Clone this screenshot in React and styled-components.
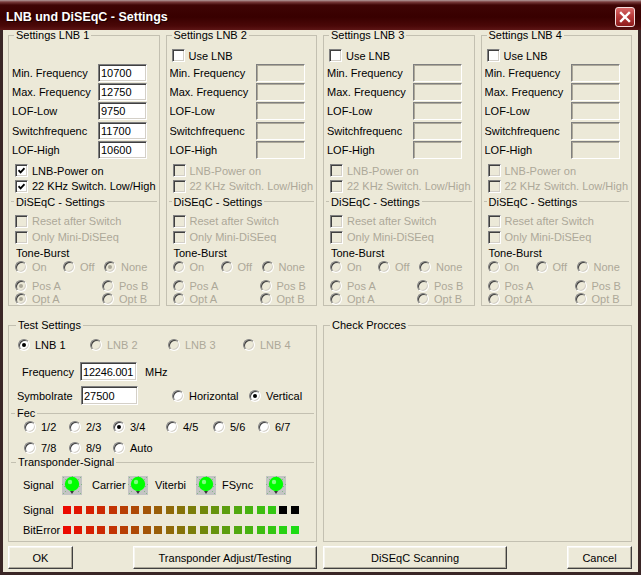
import React from 'react';
import styled, { createGlobalStyle } from 'styled-components';

const FACE = '#ece9d8';
const GRAY = '#aca899';
const LINE = '#c3c0b1';
const FRAME = '#3a2626';

const GlobalStyle = createGlobalStyle`
  html, body { margin: 0; padding: 0; background: ${FACE}; }
  body { font-family: "Liberation Sans", Arial, sans-serif; font-size: 11px; color: #000; }
  * { box-sizing: border-box; }
`;

const barColor = i => {
  const t = i / 20;
  const r = Math.round(235 - 205 * t);
  const g = Math.round(10 + 210 * t);
  return `rgb(${r},${g},${Math.round(20 * t)})`;
};

const CheckTick = () => (
  <svg width="7" height="7" viewBox="0 0 7 7">
    <path d="M0.5 3.2L2.6 5.4L6.5 1.2" fill="none" stroke="#000" strokeWidth="1.8" />
  </svg>
);

const LED_DOTS = [
  [1, 1], [3, 3], [18, 1], [16, 3], [1, 17], [3, 15], [18, 17], [16, 15],
  [0, 8], [19, 8], [2, 10], [17, 10], [10, 0]
];

const Led = () => (
  <svg width="20" height="19" viewBox="0 0 20 19">
    <rect width="20" height="19" fill="#c4c4c4" />
    {LED_DOTS.map(([x, y]) => (
      <rect key={`${x}-${y}`} x={x} y={y} width="1" height="1" fill="#86b886" />
    ))}
    <circle cx="10" cy="8" r="7.2" fill="#00ff00" />
    <circle cx="8" cy="6" r="2.2" fill="#7dff7d" />
    <path d="M8 15h4l-2 3z" fill="#3a3a3a" />
  </svg>
);

const Choice = ({ radio, checked, off, children }) => (
  <ChoiceLabel $off={off} $gap={radio ? 5 : 4}>
    {radio ? (
      <RadioMark $on={checked} $off={off} />
    ) : (
      <CheckMark $off={off}>{checked && <CheckTick />}</CheckMark>
    )}
    {children}
  </ChoiceLabel>
);

const Bars = ({ lit }) => (
  <BarStrip>
    {Array.from({ length: 21 }, (v, i) => (
      <Bar key={i} $c={i < lit ? barColor(i) : '#000'} />
    ))}
  </BarStrip>
);

const FIELDS = [
  { label: 'Min. Frequency', h: 19 },
  { label: 'Max. Frequency', h: 19 },
  { label: 'LOF-Low', h: 20 },
  { label: 'Switchfrequenc', h: 19 },
  { label: 'LOF-High', h: 20 }
];

const LnbGroup = ({ n, values }) => {
  const first = n === 1;

  return (
    <Group $pb={0.5}>
      <Legend>Settings LNB {n}</Legend>
      <Row $h={15} $mt={7} $pl={3}>
        {!first && <Choice>Use LNB</Choice>}
      </Row>
      {FIELDS.map((f, i) => (
        <Row key={f.label} $h={f.h} $pl={1}>
          <FieldLabel $w={86}>{f.label}</FieldLabel>
          <TextBox $w={49} disabled={!first} readOnly value={first ? values[i] : ''} />
        </Row>
      ))}
      <Row $h={15} $mt={3} $pl={4}>
        <Choice checked={first} off={!first}>LNB-Power on</Choice>
      </Row>
      <Row $h={16} $pl={4}>
        <Choice checked={first} off={!first}>22 KHz Switch. Low/High</Choice>
      </Row>
      <Sub $mt={1.5}>
        <Legend>DiSEqC - Settings</Legend>
        <Row $h={15} $mt={6} $pl={4}>
          <Choice off>Reset after Switch</Choice>
        </Row>
        <Row $h={17} $pl={4}>
          <Choice off>Only Mini-DiSEeq</Choice>
        </Row>
        <Row $h={15} $pl={5}>Tone-Burst</Row>
        <OptionRow $h={13} $pl={4} $cols="48px 41px auto">
          <Choice radio off>On</Choice>
          <Choice radio off>Off</Choice>
          <Choice radio off checked={first}>None</Choice>
        </OptionRow>
        <OptionRow $h={13} $mt={6} $pl={4} $cols="87px auto">
          <Choice radio off checked={first}>Pos A</Choice>
          <Choice radio off>Pos B</Choice>
        </OptionRow>
        <OptionRow $h={12} $pl={4} $cols="87px auto">
          <Choice radio off checked={first}>Opt A</Choice>
          <Choice radio off>Opt B</Choice>
        </OptionRow>
      </Sub>
    </Group>
  );
};

const App = () => (
  <>
    <GlobalStyle />
    <Window>
      <TitleBar>
        <Title>LNB und DiSEqC - Settings</Title>
        <CloseBox>
          <svg width="14" height="14" viewBox="0 0 14 14">
            <path d="M3 3L11 11M11 3L3 11" stroke="#fff" strokeWidth="2.4" strokeLinecap="square" />
          </svg>
        </CloseBox>
      </TitleBar>
      <Body>
        <TopRow>
          <LnbGroup n={1} values={['10700', '12750', '9750', '11700', '10600']} />
          <LnbGroup n={2} />
          <LnbGroup n={3} />
          <LnbGroup n={4} />
        </TopRow>

        <BottomRow>
          <Group $pb={2.5}>
            <Legend $ml={5}>Test Settings</Legend>
            <OptionRow $h={14} $mt={7} $pl={7} $cols="72px 78px 75px auto">
              <Choice radio checked>LNB 1</Choice>
              <Choice radio off>LNB 2</Choice>
              <Choice radio off>LNB 3</Choice>
              <Choice radio off>LNB 4</Choice>
            </OptionRow>
            <Row $h={19} $mt={10} $pl={11}>
              <FieldLabel $w={58}>Frequency</FieldLabel>
              <TextBox $w={57} $h={19} $tight readOnly value="12246.001" />
              <Unit>MHz</Unit>
            </Row>
            <Row $h={19} $mt={5} $pl={6}>
              <FieldLabel $w={64}>Symbolrate</FieldLabel>
              <TextBox $w={57} $h={19} readOnly value="27500" />
              <Polarity>
                <Choice radio>Horizontal</Choice>
                <Choice radio checked>Vertical</Choice>
              </Polarity>
            </Row>
            <Sub $mt={2}>
              <Legend $ml={4}>Fec</Legend>
              <OptionRow $h={16} $pl={13} $cols="45px 44px 53px 47px 45px auto">
                <Choice radio>1/2</Choice>
                <Choice radio>2/3</Choice>
                <Choice radio checked>3/4</Choice>
                <Choice radio>4/5</Choice>
                <Choice radio>5/6</Choice>
                <Choice radio>6/7</Choice>
              </OptionRow>
              <OptionRow $h={16} $mt={5} $pl={13} $cols="45px 44px auto">
                <Choice radio>7/8</Choice>
                <Choice radio>8/9</Choice>
                <Choice radio>Auto</Choice>
              </OptionRow>
            </Sub>
            <Sub>
              <Legend $ml={5}>Transponder-Signal</Legend>
              <LedRow $mt={7} $pl={12}>
                <span>Signal</span>
                <Led />
                <span>Carrier</span>
                <Led />
                <span>Viterbi</span>
                <Led />
                <span>FSync</span>
                <Led />
              </LedRow>
              <Row $h={16} $mt={7} $pl={12}>
                <FieldLabel $w={40}>Signal</FieldLabel>
                <Bars lit={19} />
              </Row>
              <Row $h={16} $mt={4} $pl={12}>
                <FieldLabel $w={40}>BitError</FieldLabel>
                <Bars lit={21} />
              </Row>
            </Sub>
          </Group>

          <Group>
            <Legend $ml={4}>Check Procces</Legend>
          </Group>
        </BottomRow>

        <ButtonRow>
          <ButtonHalf>
            <Button $w={65}>OK</Button>
            <Button $w={184}>Transponder Adjust/Testing</Button>
          </ButtonHalf>
          <ButtonHalf>
            <Button $w={184}>DiSEqC Scanning</Button>
            <Button $w={65}>Cancel</Button>
          </ButtonHalf>
        </ButtonRow>
      </Body>
    </Window>
  </>
);

export default App;

const Window = styled.div`
  width: 641px;
  height: 575px;
  display: flex;
  flex-direction: column;
  background: ${FACE};
  overflow: hidden;
`;

const TitleBar = styled.div`
  height: 30px;
  flex: none;
  display: flex;
  align-items: flex-start;
  justify-content: space-between;
  padding: 0 6px;
  background: linear-gradient(
    180deg,
    #b39c9c 0px,
    #7a3c3c 2px,
    #3e0404 5px,
    #380000 17px,
    #4a0808 26px,
    #5c1616 30px
  );
`;

const Title = styled.div`
  margin-top: 10px;
  font: bold 12.5px/14px "Liberation Sans", Arial, sans-serif;
  color: #fff;
  text-shadow: 1px 1px 0 #1a0000;
  white-space: nowrap;
`;

const CloseBox = styled.span`
  margin-top: 7px;
  width: 20px;
  height: 20px;
  display: flex;
  align-items: center;
  justify-content: center;
  border: 1px solid #f4dede;
  border-radius: 3px;
  background: linear-gradient(180deg, #d86a6a 0%, #b83a3a 45%, #8e1c1c 100%);
`;

const Body = styled.div`
  flex: 1;
  display: flex;
  flex-direction: column;
  padding: 0 6px 0 5px;
  border: 3px solid ${FRAME};
  border-top: none;
`;

const TopRow = styled.div`
  display: grid;
  grid-template-columns: repeat(4, 1fr);
  column-gap: 6px;
  margin-top: -1px;
`;

const BottomRow = styled.div`
  display: grid;
  grid-template-columns: 1fr 1fr;
  column-gap: 6px;
  margin-top: 13px;
`;

const Group = styled.fieldset`
  margin: 0;
  min-width: 0;
  padding: 0 2px ${p => p.$pb || 0}px;
  border: 1px solid ${LINE};
`;

const Sub = styled.fieldset`
  margin: ${p => p.$mt || 0}px 0 0;
  min-width: 0;
  padding: 0;
  border: none;
  border-top: 1px solid ${LINE};
`;

const Legend = styled.legend`
  margin-left: ${p => p.$ml ?? 3}px;
  padding: 0 2px;
  font-size: 11px;
  line-height: 12px;
  color: #000;
  white-space: nowrap;
`;

const Row = styled.div`
  display: flex;
  align-items: center;
  height: ${p => p.$h}px;
  margin-top: ${p => p.$mt || 0}px;
  padding-left: ${p => p.$pl || 0}px;
  white-space: nowrap;
`;

const OptionRow = styled(Row)`
  display: grid;
  grid-template-columns: ${p => p.$cols};
`;

const LedRow = styled(Row)`
  display: grid;
  grid-template-columns: 39px 30px 36px 27px 41px 26px 44px 20px;
  height: 20px;
`;

const FieldLabel = styled.span`
  flex: none;
  width: ${p => p.$w}px;
  overflow: hidden;
`;

const TextBox = styled.input`
  flex: none;
  width: ${p => p.$w}px;
  height: ${p => p.$h || 18}px;
  margin: 0;
  padding: ${p => (p.$tight ? '0 0 0 2px' : '0 2px')};
  font: 11px "Liberation Sans", Arial, sans-serif;
  letter-spacing: ${p => (p.$tight ? '-0.2px' : '0')};
  color: #000;
  border: 1px solid;
  border-color: #7f7f7f #ffffff #ffffff #7f7f7f;
  box-shadow: inset 1px 1px 0 #404040, inset -1px -1px 0 #d4d0c8;
  background: #fff;
  outline: none;

  &:disabled {
    background: ${FACE};
    box-shadow: inset 1px 1px 0 #aca899, inset -1px -1px 0 ${FACE};
  }
`;

const Unit = styled.span`
  margin-left: 8px;
`;

const Polarity = styled.div`
  display: grid;
  grid-template-columns: 77px auto;
  margin-left: 34px;
`;

const ChoiceLabel = styled.span`
  display: flex;
  align-items: center;
  gap: ${p => p.$gap}px;
  color: ${p => (p.$off ? GRAY : '#000')};
  white-space: nowrap;
`;

const CheckMark = styled.span`
  flex: none;
  width: 13px;
  height: 13px;
  display: flex;
  align-items: center;
  justify-content: center;
  border: 1px solid;
  border-color: #808080 #ffffff #ffffff #808080;
  box-shadow: inset 1px 1px 0 #404040, inset -1px -1px 0 #d4d0c8;
  background: ${p => (p.$off ? FACE : '#fff')};
`;

const RadioMark = styled.span`
  flex: none;
  width: 12px;
  height: 12px;
  display: flex;
  align-items: center;
  justify-content: center;
  border-radius: 50%;
  border: 1px solid;
  border-color: #808080 #ffffff #ffffff #808080;
  box-shadow: inset 1px 1px 0 #404040, inset -1px -1px 0 #d4d0c8;
  background: ${p => (p.$off ? FACE : '#fff')};

  &::after {
    content: '';
    display: ${p => (p.$on ? 'block' : 'none')};
    width: 4px;
    height: 4px;
    border-radius: 50%;
    background: ${p => (p.$off ? GRAY : '#000')};
  }
`;

const BarStrip = styled.div`
  display: flex;
  gap: 3.4px;
`;

const Bar = styled.span`
  flex: none;
  width: 8px;
  height: 8px;
  background: ${p => p.$c};
`;

const ButtonRow = styled.div`
  display: grid;
  grid-template-columns: 1fr 1fr;
  column-gap: 6px;
  margin-top: 4.5px;
`;

const ButtonHalf = styled.div`
  display: flex;
  justify-content: space-between;
`;

const Button = styled.button`
  width: ${p => p.$w}px;
  height: 23px;
  margin: 0;
  padding: 0;
  font: 11px "Liberation Sans", Arial, sans-serif;
  color: #000;
  background: ${FACE};
  border: 1px solid;
  border-color: #ffffff #404040 #404040 #ffffff;
  box-shadow: inset -1px -1px 0 #aca899, inset 1px 1px 0 #f6f5ef;
  border-radius: 0;
`;
